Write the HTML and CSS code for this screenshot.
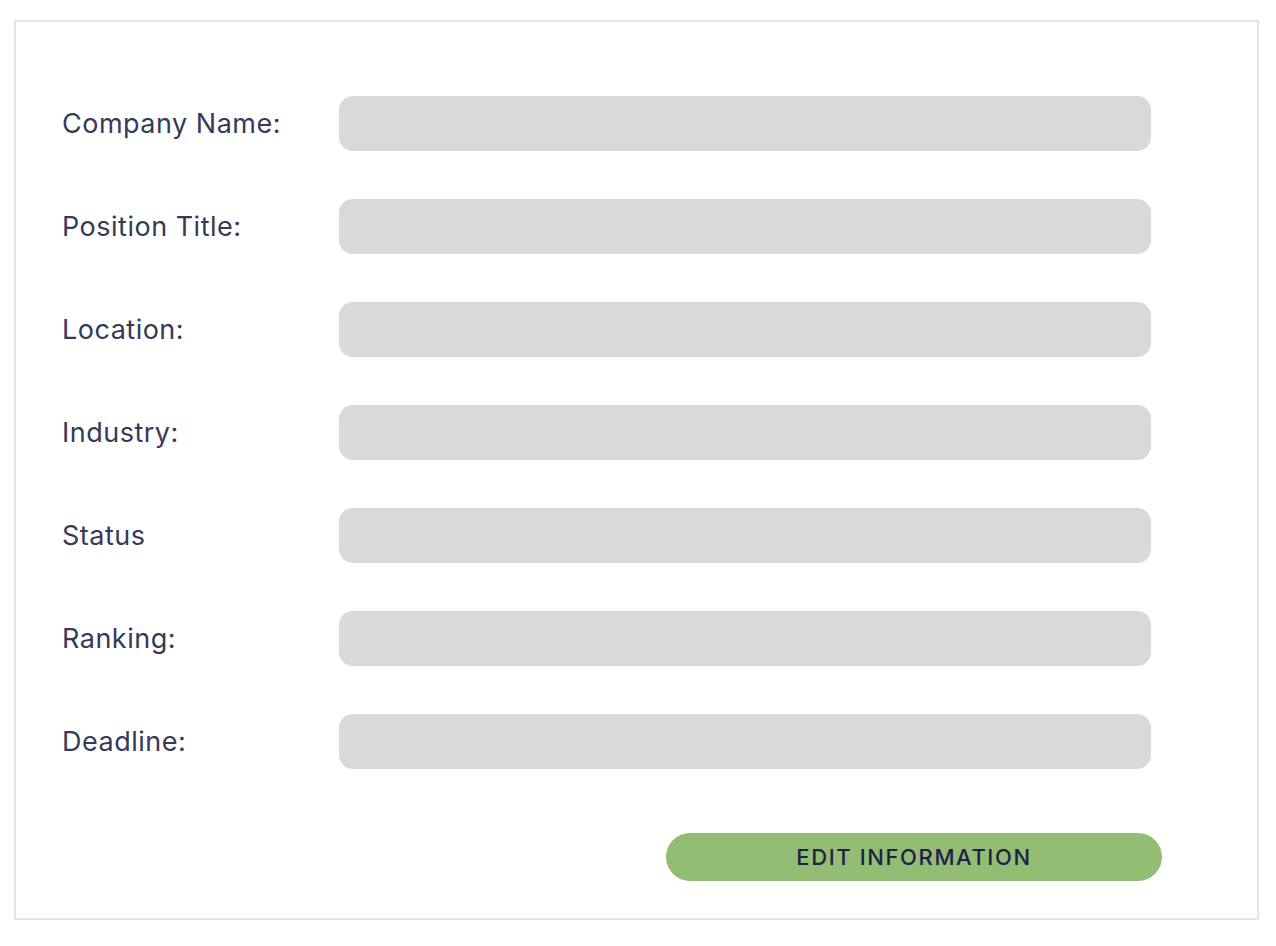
FILE: index.html
```html
<!DOCTYPE html>
<html>
<head>
<meta charset="utf-8">
<link rel="stylesheet" href="styles.css">
</head>
<body>
<div class="card">
  <div class="form">
    <div class="row"><label class="label">Company Name:</label><div class="field"></div></div>
    <div class="row"><label class="label">Position Title:</label><div class="field"></div></div>
    <div class="row"><label class="label">Location:</label><div class="field"></div></div>
    <div class="row"><label class="label">Industry:</label><div class="field"></div></div>
    <div class="row"><label class="label">Status</label><div class="field"></div></div>
    <div class="row"><label class="label">Ranking:</label><div class="field"></div></div>
    <div class="row"><label class="label">Deadline:</label><div class="field"></div></div>
  </div>
  <div class="actions">
    <button class="btn">EDIT INFORMATION</button>
  </div>
</div>
</body>
</html>
```
FILE: styles.css
```css
html, body {
  margin: 0;
  padding: 0;
  background: #ffffff;
}
body {
  padding: 20px 0 0 14px;
  font-family: Inter, "Liberation Sans", sans-serif;
}
.card {
  box-sizing: border-box;
  width: 1245px;
  height: 900px;
  border: 2px solid #e4e4e4;
  padding: 74px 0 0 46px;
}
.form {
  display: flex;
  flex-direction: column;
  gap: 48px;
}
.row {
  display: grid;
  grid-template-columns: 277px 812px;
  align-items: center;
}
.label {
  font-size: 27px;
  color: #353a58;
  letter-spacing: 0.5px;
}
.field {
  height: 55px;
  background: #d9d9d9;
  border-radius: 14px;
}
.actions {
  display: flex;
  padding-left: 604px;
  margin-top: 64px;
}
.btn {
  width: 496px;
  height: 48px;
  border: none;
  border-radius: 24px;
  background: #94bd74;
  color: #1f214b;
  font-family: Inter, "Liberation Sans", sans-serif;
  font-size: 22px;
  font-weight: 500;
  letter-spacing: 1.6px;
  padding: 0;
}
```
